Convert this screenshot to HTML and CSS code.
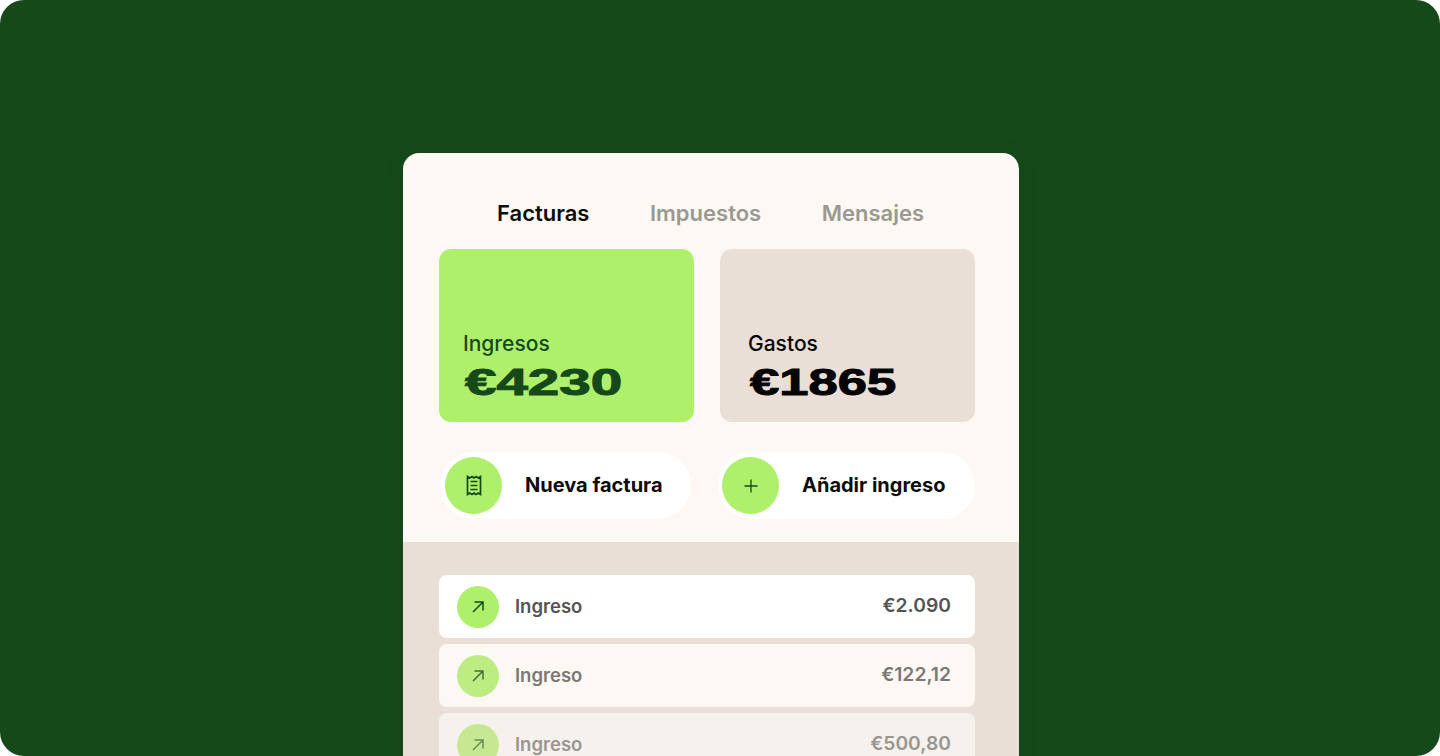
FILE: index.html
```html
<!DOCTYPE html>
<html lang="es">
<head>
    <meta charset="UTF-8">
    <meta name="viewport" content="width=device-width, initial-scale=1.0">
    <title>Facturas</title>
    <link rel="stylesheet" href="styles.css">
</head>
<body>
    <div class="stage">
        <div class="panel">
            <div class="top">
                <nav class="tabs">
                    <span class="tab active">Facturas</span>
                    <span class="tab">Impuestos</span>
                    <span class="tab">Mensajes</span>
                </nav>

                <div class="stats">
                    <div class="stat income">
                        <div class="stat-label">Ingresos</div>
                        <div class="stat-value">€4230</div>
                    </div>
                    <div class="stat expense">
                        <div class="stat-label">Gastos</div>
                        <div class="stat-value">€1865</div>
                    </div>
                </div>

                <div class="actions">
                    <button class="action first">
                        <span class="action-icon">
                            <svg width="16" height="21" viewBox="0 0 16 21" fill="none" stroke="#16491a" stroke-width="1.7">
                                <path d="M1.5 1.5 L3.7 2.9 L6 1.5 L8 2.9 L10 1.5 L12.3 2.9 L14.5 1.5 V19.5 L12.3 18.1 L10 19.5 L8 18.1 L6 19.5 L3.7 18.1 L1.5 19.5 Z"/>
                                <path d="M4.5 6.5 H11.5 M4.5 10.5 H11.5 M4.5 14.5 H11.5"/>
                            </svg>
                        </span>
                        <span>Nueva factura</span>
                    </button>
                    <button class="action second">
                        <span class="action-icon">
                            <svg width="14" height="14" viewBox="0 0 14 14" fill="none" stroke="#16491a" stroke-width="1.3">
                                <path d="M7 0.5 V13.5 M0.5 7 H13.5"/>
                            </svg>
                        </span>
                        <span>Añadir ingreso</span>
                    </button>
                </div>
            </div>

            <div class="list">
                <div class="row row-1">
                    <span class="row-icon">
                        <svg width="14" height="14" viewBox="0 0 14 14" fill="none" stroke="#16491a" stroke-width="1.5">
                            <path d="M2 12 L12 2 M3.5 2 H12 V10.5"/>
                        </svg>
                    </span>
                    <span class="row-name">Ingreso</span>
                    <span class="row-amount">€2.090</span>
                </div>
                <div class="row row-2">
                    <span class="row-icon">
                        <svg width="14" height="14" viewBox="0 0 14 14" fill="none" stroke="#16491a" stroke-width="1.5">
                            <path d="M2 12 L12 2 M3.5 2 H12 V10.5"/>
                        </svg>
                    </span>
                    <span class="row-name">Ingreso</span>
                    <span class="row-amount">€122,12</span>
                </div>
                <div class="row row-3">
                    <span class="row-icon">
                        <svg width="14" height="14" viewBox="0 0 14 14" fill="none" stroke="#16491a" stroke-width="1.5">
                            <path d="M2 12 L12 2 M3.5 2 H12 V10.5"/>
                        </svg>
                    </span>
                    <span class="row-name">Ingreso</span>
                    <span class="row-amount">€500,80</span>
                </div>
            </div>
        </div>
    </div>
</body>
</html>
```

FILE: styles.css
```css
html, body {
    margin: 0;
    height: 756px;
    overflow: hidden;
    background: white;
}
body {
    font-family: "Inter", "Liberation Sans", sans-serif;
}
.stage {
    height: 756px;
    box-sizing: border-box;
    padding: 153px 0 0 403px;
    background-color: #16491a;
    border-radius: 24px;
    overflow: hidden;
}
.panel {
    width: 616px;
    height: 640px;
    background-color: #fdf8f4;
    border-radius: 16px;
    box-shadow: 0 0 24px rgba(0,0,0,0.05);
    overflow: hidden;
}
.top {
    height: 389px;
    box-sizing: border-box;
    padding: 47px 44px 0 36px;
}
.tabs {
    display: flex;
    gap: 60.5px;
    padding-left: 58px;
    height: 49px;
}
.tab {
    font-size: 22px;
    line-height: 27px;
    font-weight: 600;
    color: #9b9892;
}
.tab.active {
    color: #0c0c0c;
}
.stats {
    display: flex;
    gap: 26px;
}
.stat {
    flex: none;
    width: 255px;
    height: 173px;
    box-sizing: border-box;
    padding: 82px 24px 0;
    border-radius: 12px;
}
.income {
    background-color: #aeef6b;
    color: #16491a;
}
.expense {
    background-color: #e9dfd7;
    color: #050505;
    padding-left: 28px;
}
.stat-label {
    font-size: 21px;
    line-height: 26px;
    font-weight: 500;
}
.stat-value {
    margin: 4px 0 0 2px;
    font-family: "Liberation Sans", sans-serif;
    font-size: 36px;
    line-height: 44px;
    font-weight: 700;
    -webkit-text-stroke: 1px currentColor;
    transform: scaleX(1.57);
    transform-origin: left center;
}
.expense .stat-value {
    transform: scaleX(1.46);
}
.actions {
    display: flex;
    margin-top: 30px;
}
.action {
    display: flex;
    align-items: center;
    height: 67px;
    padding: 0 5px;
    border: none;
    border-radius: 34px;
    background: white;
    font-family: inherit;
    font-size: 20px;
    font-weight: 700;
    color: #0c0c0c;
}
.action span:last-child {
    margin-top: -2px;
}
.action.first {
    width: 251px;
    margin-left: 1px;
    gap: 23px;
}
.action.second {
    width: 257px;
    margin-left: 27px;
    padding-left: 4px;
    gap: 23px;
}
.action-icon {
    display: flex;
    align-items: center;
    justify-content: center;
    width: 57px;
    height: 57px;
    border-radius: 50%;
    background-color: #aeef6b;
}
.list {
    height: 251px;
    box-sizing: border-box;
    padding: 33px 44px 0 36px;
    background-color: #e9dfd7;
    display: flex;
    flex-direction: column;
    gap: 6.5px;
}
.row {
    display: flex;
    align-items: center;
    flex: none;
    height: 62.5px;
    box-sizing: border-box;
    padding: 1px 24px 0 18px;
    border-radius: 8px;
    font-size: 18.5px;
    font-weight: 600;
    color: #555;
}
.row-icon {
    display: flex;
    align-items: center;
    justify-content: center;
    width: 42px;
    height: 42px;
    border-radius: 50%;
    background-color: #aeef6b;
}
.row-name {
    margin: -2px 0 0 16px;
    flex: 1;
}
.row-amount {
    margin-top: -4px;
    font-size: 19.3px;
}
.row-1 {
    background: white;
}
.row-2 {
    background-color: #fdf8f4;
    color: #7b7975;
}
.row-2 .row-icon {
    background-color: #bcec82;
}
.row-2 svg {
    opacity: 0.75;
}
.row-3 {
    background-color: #f5f1ed;
    color: #999690;
}
.row-3 .row-icon {
    background-color: #c6e892;
}
.row-3 svg {
    opacity: 0.55;
}
```
